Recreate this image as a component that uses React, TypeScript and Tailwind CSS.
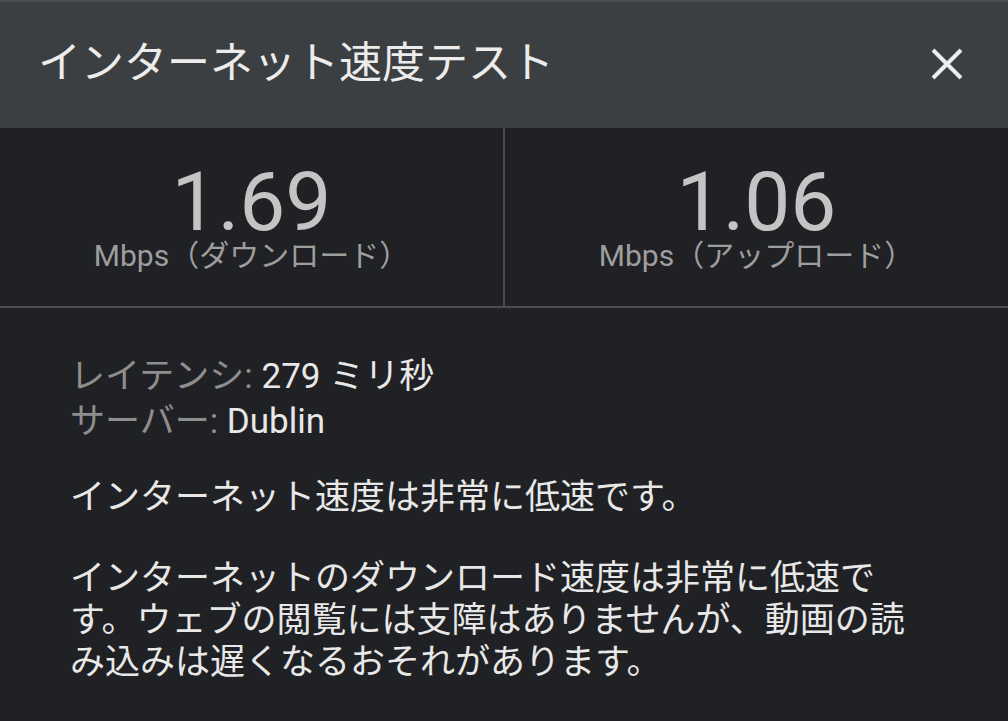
const font = {
  fontFamily: 'Roboto, "Noto Sans CJK JP", sans-serif',
};

function Metric({ value, label }: { value: string; label: string }) {
  return (
    <div className="flex flex-1 flex-col items-center pt-[37px]">
      <div className="text-[82px] leading-[74px] text-[#c4c4c4]">{value}</div>
      <div className="text-[30px] leading-[34px] text-[#9e9e9e]">{label}</div>
    </div>
  );
}

export default function App() {
  return (
    <div className="h-[721px] w-[1008px] overflow-hidden bg-[#202124]" style={font}>
      {/* Header */}
      <div className="border-t-2 border-[#4a4c4f] bg-[#3c3f42]">
        <div className="flex h-[126px] items-center justify-between pb-[3px] pl-[38px] pr-[45px]">
          <h1 className="text-[43px] font-normal text-[#ececec]">インターネット速度テスト</h1>
          <svg width="32" height="32" viewBox="0 0 32 32" className="text-[#ececec]">
            <path d="M2 2 L30 30 M30 2 L2 30" stroke="currentColor" strokeWidth="4" fill="none" />
          </svg>
        </div>
      </div>

      {/* Metrics */}
      <div className="flex h-[180px] border-b-2 border-[#4a4c4f]">
        <Metric value="1.69" label="Mbps（ダウンロード）" />
        <div className="w-[2px] bg-[#4a4c4f]" />
        <Metric value="1.06" label="Mbps（アップロード）" />
      </div>

      {/* Details */}
      <div className="px-[70px] pt-[46px] text-[35px] text-[#e8e8e8]">
        <div className="leading-[45px]">
          <div>
            <span className="text-[#8e8e8e]">レイテンシ:</span> 279 ミリ秒
          </div>
          <div>
            <span className="text-[#8e8e8e]">サーバー:</span> Dublin
          </div>
        </div>
        <p className="mt-[33px] leading-[42px]">インターネット速度は非常に低速です。</p>
        <p className="mt-[39px] leading-[42px]">
          インターネットのダウンロード速度は非常に低速です。ウェブの閲覧には支障はありませんが、動画の読み込みは遅くなるおそれがあります。
        </p>
      </div>
    </div>
  );
}
